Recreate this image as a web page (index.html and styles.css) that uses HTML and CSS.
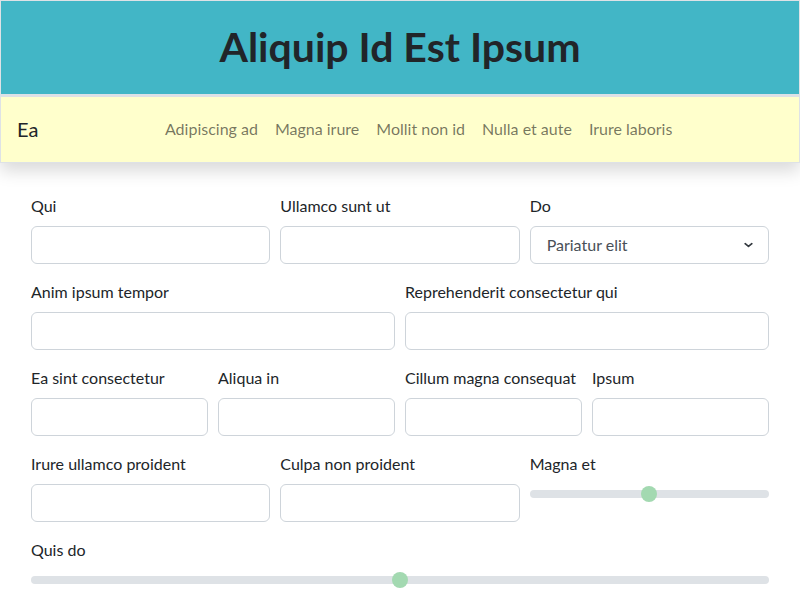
FILE: index.html
```html
<!DOCTYPE html>
<html lang="en">
<head>
<meta charset="utf-8">
<title>Aliquip Id Est Ipsum</title>
<link rel="stylesheet" href="styles.css">
</head>
<body>
<div class="top">
  <header class="hero"><h1 class="title">Aliquip Id Est Ipsum</h1></header>
  <nav class="bar">
    <span class="brand">Ea</span>
    <ul class="links">
      <li><a class="link" href="#">Adipiscing ad</a></li>
      <li><a class="link" href="#">Magna irure</a></li>
      <li><a class="link" href="#">Mollit non id</a></li>
      <li><a class="link" href="#">Nulla et aute</a></li>
      <li><a class="link" href="#">Irure laboris</a></li>
    </ul>
  </nav>
</div>
<form class="form">
  <div class="row">
    <div class="field"><label class="label">Qui</label><input class="input" type="text"></div>
    <div class="field"><label class="label">Ullamco sunt ut</label><input class="input" type="text"></div>
    <div class="field"><label class="label">Do</label>
      <select class="select"><option>Pariatur elit</option></select>
    </div>
  </div>
  <div class="row">
    <div class="field"><label class="label">Anim ipsum tempor</label><input class="input" type="text"></div>
    <div class="field"><label class="label">Reprehenderit consectetur qui</label><input class="input" type="text"></div>
  </div>
  <div class="row">
    <div class="field"><label class="label">Ea sint consectetur</label><input class="input" type="text"></div>
    <div class="field"><label class="label">Aliqua in</label><input class="input" type="text"></div>
    <div class="field"><label class="label">Cillum magna consequat</label><input class="input" type="text"></div>
    <div class="field"><label class="label">Ipsum</label><input class="input" type="text"></div>
  </div>
  <div class="row">
    <div class="field"><label class="label">Irure ullamco proident</label><input class="input" type="text"></div>
    <div class="field"><label class="label">Culpa non proident</label><input class="input" type="text"></div>
    <div class="field"><label class="label">Magna et</label><input class="range" type="range" min="0" max="100" value="50"></div>
  </div>
  <div class="row">
    <div class="field"><label class="label">Quis do</label><input class="range" type="range" min="0" max="100" value="50"></div>
  </div>
</form>
</body>
</html>
```
FILE: styles.css
```css
* { box-sizing: border-box; }
body {
  margin: 0;
  font-family: Lato, "Liberation Sans", sans-serif;
  font-size: 16px;
  line-height: 24px;
  color: #212529;
  background: #fff;
}
.top {
  border: 1px solid #dee2e6;
  box-shadow: 0 8px 16px rgba(0, 0, 0, 0.15);
}
.hero {
  background: #42b6c6;
  height: 96px;
  border-bottom: 3px solid #dde1e6;
  display: flex;
  align-items: center;
  justify-content: center;
}
.title {
  margin: 0;
  font-size: 41px;
  line-height: 48px;
  font-weight: 700;
  color: #212529;
  padding-bottom: 1px;
}
.bar {
  background: #ffffcc;
  height: 65px;
  display: flex;
  align-items: center;
  padding: 0 16px 2px;
}
.brand {
  font-size: 20px;
  line-height: 30px;
  margin-right: 16px;
  color: #212529;
}
.links {
  list-style: none;
  margin: 0 auto;
  padding: 0;
  display: flex;
}
.link {
  display: block;
  padding: 8px 8.5px;
  color: rgba(0, 0, 0, 0.55);
  text-decoration: none;
}
.form {
  padding: 31px 31px 0;
}
.row {
  display: flex;
  gap: 10px;
  margin-bottom: 16px;
}
.field {
  flex: 1 1 0;
  min-width: 0;
  display: flex;
  flex-direction: column;
}
.label {
  display: block;
  margin-bottom: 8px;
  white-space: nowrap;
}
.input, .select {
  display: block;
  width: 100%;
  height: 38px;
  border: 1px solid #ced4da;
  border-radius: 6px;
  background: #fff;
  font: inherit;
  color: #212529;
  padding: 6px 12px;
}
.select {
  appearance: none;
  -webkit-appearance: none;
  padding: 6px 36px 6px 16px;
  color: #495057;
  background-image: url("data:image/svg+xml,%3csvg xmlns='http://www.w3.org/2000/svg' viewBox='0 0 16 12'%3e%3cpath fill='none' stroke='%23343a40' stroke-linecap='round' stroke-linejoin='round' stroke-width='2.6' d='M3 4l5 4 5-4'/%3e%3c/svg%3e");
  background-repeat: no-repeat;
  background-position: right 14px center;
  background-size: 11px 8px;
}
.range {
  -webkit-appearance: none;
  appearance: none;
  width: 100%;
  height: 20px;
  margin: 0;
  padding: 0;
  background: transparent;
}
.range::-webkit-slider-runnable-track {
  height: 8px;
  border-radius: 8px;
  background: #dee2e6;
}
.range::-webkit-slider-thumb {
  -webkit-appearance: none;
  width: 16px;
  height: 16px;
  margin-top: -4px;
  border-radius: 50%;
  border: 0;
  background: #a3d9b1;
}
```
